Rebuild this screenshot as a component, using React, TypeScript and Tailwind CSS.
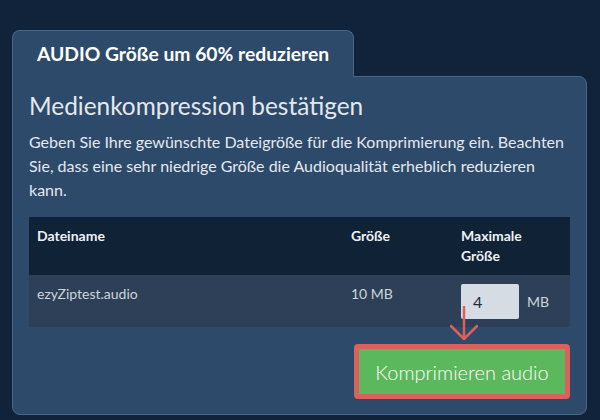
export default function App() {
  return (
    <main
      className="min-h-[420px] w-full bg-[#10233a] pl-3 pr-[13px] pt-[30px] pb-[5px]"
      style={{ fontFamily: "Lato, 'Noto Sans', sans-serif" }}
    >
      <div className="flex flex-col">
        <div className="relative z-10 -mb-px self-start rounded-t-lg border border-b-0 border-[#4a6686] bg-[#2d4a6a] px-6 pt-[11px] pb-[12px]">
          <h2 className="text-[19.3px] font-bold leading-[23px] text-white">AUDIO Größe um 60% reduzieren</h2>
        </div>
        <div className="rounded-b-lg rounded-tr-lg border border-[#4a6686] bg-[#2d4a6a] px-4 pt-[14px] pb-[15px]">
          <h1 className="text-[24.4px] leading-[29px] text-[#e4e8ee]">Medienkompression bestätigen</h1>
          <p className="mt-[10px] -mr-[2px] text-[16px] leading-[24px] text-[#e4e8ee]">
            Geben Sie Ihre gewünschte Dateigröße für die Komprimierung ein. Beachten Sie, dass eine sehr niedrige Größe die Audioqualität erheblich reduzieren kann.
          </p>
          <table className="mt-[15px] w-full table-fixed border-collapse text-left text-[14px] leading-[20px]">
            <colgroup>
              <col className="w-[314px]" />
              <col className="w-[110px]" />
              <col />
            </colgroup>
            <thead>
              <tr className="bg-[#0f2236] text-[#eef1f5]">
                <th className="px-2 pt-[9px] pb-[9px] align-top font-bold">Dateiname</th>
                <th className="px-2 pt-[9px] pb-[9px] align-top font-bold">Größe</th>
                <th className="px-2 pt-[9px] pb-[9px] align-top font-bold">
                  Maximale
                  <br />
                  Größe
                </th>
              </tr>
            </thead>
            <tbody>
              <tr className="bg-[#2e4057] text-[#cdd4dd]">
                <td className="px-2 pt-[9px] pb-2 align-top">ezyZiptest.audio</td>
                <td className="px-2 pt-[9px] pb-2 align-top">10 MB</td>
                <td className="px-2 pt-[9px] pb-2 align-top">
                  <div className="flex items-center gap-2">
                    <div className="relative">
                      <input
                        defaultValue="4"
                        className="h-[35px] w-[58px] rounded-[2px] bg-[#d6dce4] pl-3 text-[16px] text-[#1f2a37] outline-none"
                        style={{ fontFamily: "Lato, 'Noto Sans', sans-serif" }}
                      />
                      <svg
                        className="absolute left-[-11px] top-[22px]"
                        width="28"
                        height="36"
                        viewBox="0 0 28 36"
                        fill="none"
                      >
                        <path d="M14 1 V33 M1 20 L14 33 L27 20" stroke="#dc5f5a" strokeWidth="2.5" strokeLinecap="round" strokeLinejoin="round" />
                      </svg>
                    </div>
                    <span className="text-[#cdd4dd]">MB</span>
                  </div>
                </td>
              </tr>
            </tbody>
          </table>
          <div className="mt-[17px] flex justify-end">
            <button className="h-[55px] w-[216px] rounded-[4px] border-[5px] border-[#dc605b] bg-[#5cb85c] text-[20px] font-light text-white">
              Komprimieren audio
            </button>
          </div>
        </div>
      </div>
    </main>
  );
}
